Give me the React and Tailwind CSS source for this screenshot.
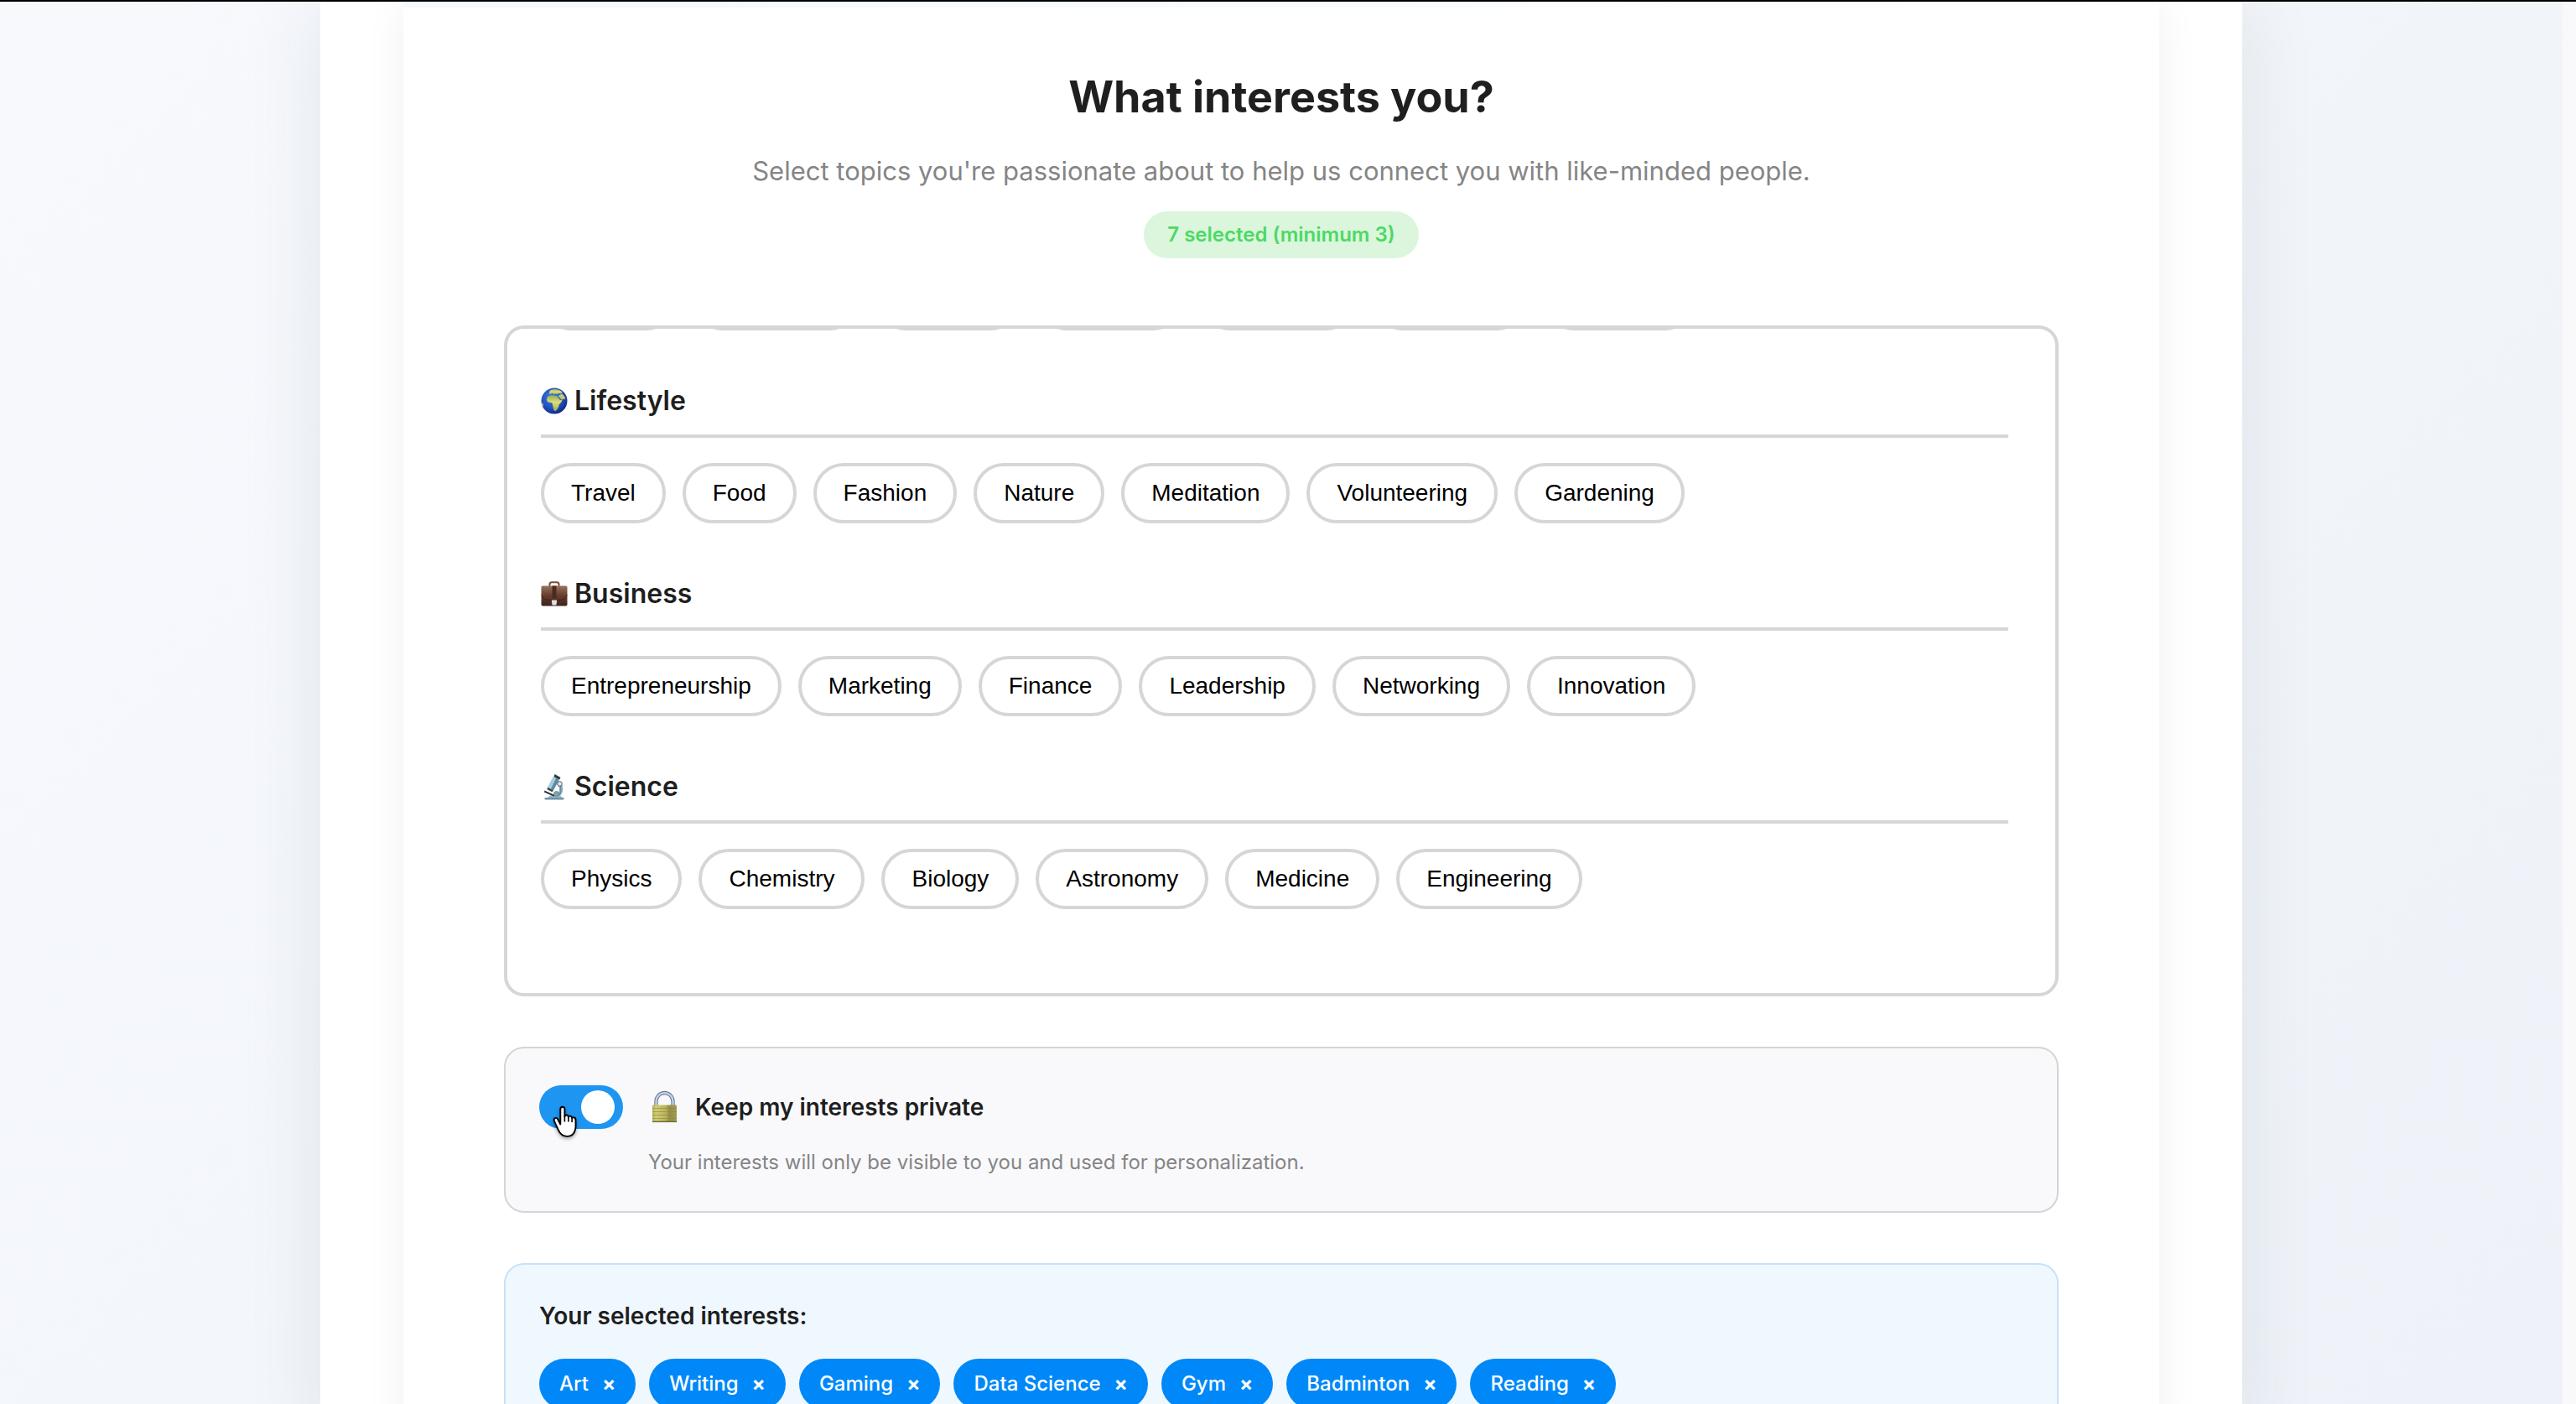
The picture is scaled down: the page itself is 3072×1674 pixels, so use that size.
import { useState } from "react";

const PREVIOUS_ROW = [
  "w-[161px]",
  "w-[199px]",
  "w-[172px]",
  "w-[174px]",
  "w-[186px]",
  "w-[184px]",
  "w-[180px]",
];

const CATEGORIES = [
  {
    name: "Lifestyle",
    Icon: GlobeIcon,
    topics: ["Travel", "Food", "Fashion", "Nature", "Meditation", "Volunteering", "Gardening"],
  },
  {
    name: "Business",
    Icon: BriefcaseIcon,
    topics: ["Entrepreneurship", "Marketing", "Finance", "Leadership", "Networking", "Innovation"],
  },
  {
    name: "Science",
    Icon: MicroscopeIcon,
    topics: ["Physics", "Chemistry", "Biology", "Astronomy", "Medicine", "Engineering"],
  },
];

const SELECTED = ["Art", "Writing", "Gaming", "Data Science", "Gym", "Badminton", "Reading"];

function GlobeIcon() {
  return (
    <svg viewBox="0 0 32 32" className="size-8 shrink-0" aria-hidden="true">
      <defs>
        <radialGradient id="sea" cx="0.4" cy="0.35" r="0.7">
          <stop offset="0" stopColor="#3f7be0" />
          <stop offset="0.6" stopColor="#2150c0" />
          <stop offset="1" stopColor="#12277c" />
        </radialGradient>
        <linearGradient id="land" x1="0" y1="0" x2="0" y2="1">
          <stop offset="0" stopColor="#8fae4c" />
          <stop offset="0.45" stopColor="#e3dc7c" />
          <stop offset="1" stopColor="#8fb24e" />
        </linearGradient>
      </defs>
      <circle cx="16" cy="16" r="15.5" fill="url(#sea)" />
      <path d="M11 3.600c2.500-1.600 7-2 10-.8 1.700.7 3.400 1.800 4.600 3l-1.600 1.700-3-.5-1.500 1.500-2-1-2.500.8-1-1.800-2.500 1.600-2-.3z" fill="url(#land)" />
      <path d="M7.500 12c.8-2 3.500-3 6.500-2.800 2 .1 3.500 1 5.500 1 1.400 1.500 1.800 3.400 3.400 4.600l2.600.2c-.4 2.200-2.500 3.800-3.800 5.400-.4 1.800-.2 3-1.400 4.400-1 1.700-2 3.300-3.800 3.200-1.500-.9-1.500-3.500-2.100-5.300-.6-1.500-.1-3-1-4.300-1.500-.8-4-.1-5.200-1.500-1.300-1.500-1.500-3.300-.7-4.900z" fill="url(#land)" />
      <path d="M21 9.500l4.500-2 3 3.500.8 3-1.800-.4-2.300 1.200-3.200-2.900z" fill="#c9c66a" />
      <path d="M.9 18.500l1.600.5.5 2.800-.9 1.300a15 15 0 0 1-1.200-4.600z" fill="#d8d04e" />
    </svg>
  );
}

function BriefcaseIcon() {
  return (
    <svg viewBox="0 0 32 32" className="size-8 shrink-0" aria-hidden="true">
      <defs>
        <linearGradient id="leather" x1="0" y1="0" x2="0" y2="1">
          <stop offset="0" stopColor="#96735b" />
          <stop offset="0.45" stopColor="#6b4030" />
          <stop offset="1" stopColor="#3d231b" />
        </linearGradient>
      </defs>
      <path d="M10.500 7V4.800c0-1.600 1-2.500 2.500-2.500h6c1.500 0 2.500.9 2.500 2.500V7" fill="none" stroke="#7d4a3c" strokeWidth="2" />
      <rect x="0.500" y="6.500" width="31" height="24" rx="1.800" fill="url(#leather)" />
      <path d="M1 17c1 5 5 6.500 9 6.500h12c4 0 8-1.500 9-6.500" fill="none" stroke="#3a2018" strokeWidth="1" />
      <rect x="13.500" y="6.500" width="5" height="15" fill="#4a2a20" />
      <path d="M12.800 23.500h6.400l-.8 6h-4.800z" fill="#e4e2e0" />
    </svg>
  );
}

function MicroscopeIcon() {
  return (
    <svg viewBox="0 0 32 32" className="size-8 shrink-0" aria-hidden="true">
      <path d="M21 9c6 2.500 7.500 13 1.500 18.500h-5c5-3 6-11 2-14z" fill="#8fb0bf" />
      <path d="M20.500 12c4.500 3 4.500 11 .5 15" fill="none" stroke="#5c7f92" strokeWidth="1" />
      <rect x="4.500" y="29" width="23" height="2.500" rx="0.800" fill="#6f93a5" />
      <path d="M8 29l3-2.500h12l2.500 2.500z" fill="#9cb8c4" />
      <path d="M4.500 20.500l12 5.500-.8 1.800-11.800-5.300z" fill="#2c3238" />
      <path d="M14.500 4l7 3.800-6.500 12.500-7-3.500z" fill="#a9cddd" />
      <path d="M18 6l3.500 1.800-6.500 12.500-3-1.500z" fill="#5d8aa3" />
      <path d="M8 16.800l7 3.500-1.500 2-6-3z" fill="#39434b" />
      <path d="M16.500 1l7 4-1.500 2.800-6.500-3.600z" fill="#2f3a44" />
      <circle cx="22.500" cy="12.500" r="2.800" fill="#dfe8ec" stroke="#4e5d66" strokeWidth="1" />
      <circle cx="18.500" cy="24.500" r="3" fill="#84a3b1" stroke="#5e7d8d" strokeWidth="0.800" />
    </svg>
  );
}

function LockIcon() {
  return (
    <svg viewBox="0 0 36 40" className="h-10 w-9 shrink-0" aria-hidden="true">
      <defs>
        <linearGradient id="brass" x1="0" y1="0" x2="1" y2="0">
          <stop offset="0" stopColor="#b7b057" />
          <stop offset="0.15" stopColor="#d3cd72" />
          <stop offset="0.55" stopColor="#b9b25c" />
          <stop offset="0.7" stopColor="#948e47" />
          <stop offset="1" stopColor="#a39c52" />
        </linearGradient>
      </defs>
      <path d="M9.500 18V13.500a10 10.500 0 0 1 20 0V18" fill="none" stroke="#6e8096" strokeWidth="4.400" />
      <path d="M9.500 18V13.500a10 10.500 0 0 1 20 0V18" fill="none" stroke="#c2d3e6" strokeWidth="2.200" />
      <rect x="5" y="17.500" width="29" height="20.500" rx="1" fill="url(#brass)" />
      <path d="M5 21.500h29M5 25.500h29M5 29.500h29M5 33.500h29" stroke="#8b8540" strokeWidth="0.600" />
      <path d="M5 37.400h29" stroke="#6f6a34" strokeWidth="1.400" />
    </svg>
  );
}

function HandCursor() {
  return (
    <svg
      viewBox="0 0 30 40"
      className="pointer-events-none absolute top-6 left-4 h-10 w-[30px] drop-shadow-[0_2px_2px_rgba(0,0,0,0.35)]"
      aria-hidden="true"
    >
      <path
        d="M9.300 22.500V4.600c0-1.800 1.100-2.900 2.500-2.900s2.600 1.100 2.600 2.900v8.600c.3-1.200 1.200-1.800 2.300-1.700 1.200.1 2 .9 2.200 2.200.4-.8 1.200-1.200 2.200-1 1.200.2 1.900 1 2 2.200.5-.6 1.200-.8 2-.6 1.500.3 2.400 1.500 2.400 3.200 0 3.500.5 7.500-.5 11.500-1.200 5-4.500 7.800-9.500 7.900-5.200.1-8.400-2.700-10.500-7.300C5.300 25.800 3.200 21.500 2 18.600c-.7-1.800-.3-3 .9-3.500 1.300-.5 2.600.1 3.400 1.600z"
        fill="#fff"
        stroke="#000"
        strokeWidth="1.900"
        strokeLinejoin="round"
      />
      <path d="M14.400 12.500v6.500M18.900 13.500V19M23.100 14.800V19.500" stroke="#000" strokeWidth="1.600" strokeLinecap="round" />
    </svg>
  );
}

function Category({ name, Icon, topics }) {
  return (
    <section className="mb-15">
      <h2 className="flex items-center gap-2 border-b-4 border-[#d6d6d6] pb-4 text-[32px] leading-12 font-semibold text-[#1f1f1f]">
        <Icon />
        {name}
      </h2>
      <div className="mt-[30px] flex flex-wrap gap-5">
        {topics.map((topic) => (
          <button
            key={topic}
            type="button"
            className="rounded-full border-4 border-[#d6d6d6] bg-white px-8 py-4 font-['Liberation_Sans',Arial,sans-serif] text-[28px] leading-8 text-black"
          >
            {topic}
          </button>
        ))}
      </div>
    </section>
  );
}

export default function App() {
  const [isPrivate, setIsPrivate] = useState(true);
  const [selected, setSelected] = useState(SELECTED);

  return (
    <div className="h-screen overflow-hidden border-t-2 border-black bg-[#f9f9fb] pr-4 font-[Inter,'Noto_Sans',sans-serif]">
      <div className="h-full bg-linear-135 from-[#f7f9fd] to-[#eef2f8]">
        <div className="mx-auto w-3/4 bg-white px-[99px] shadow-[0_0_90px_rgba(20,50,60,0.09)]">
          <main className="bg-white shadow-[0_0_48px_rgba(0,0,0,0.06)]">
            <div className="h-[7px] bg-linear-to-r from-[#f2f9ff] to-white" />
            <div className="px-30">
              <header className="flex flex-col items-center pt-[67px] text-center">
                <h1 className="text-[52px] leading-20 font-bold text-[#1f1f1f]">What interests you?</h1>
                <p className="mt-6 text-[31px] leading-12 text-[#858585]">
                  Select topics you're passionate about to help us connect you with like-minded people.
                </p>
                <span className="mt-6 rounded-full bg-[#dbf6dd] px-7 py-2 text-2xl leading-10 font-semibold text-[#4cd964]">
                  {selected.length} selected (minimum 3)
                </span>
              </header>

              <div className="mt-20 flex h-[800px] flex-col justify-end overflow-hidden rounded-3xl border-4 border-[#d6d6d6] pt-10 pr-14 pb-10 pl-10">
                <div className="mb-15 flex gap-5" aria-hidden="true">
                  {PREVIOUS_ROW.map((width, i) => (
                    <span key={i} className={"h-18 rounded-full border-4 border-[#d6d6d6] " + width} />
                  ))}
                </div>
                {CATEGORIES.map((category) => (
                  <Category key={category.name} {...category} />
                ))}
              </div>

              <div className="mt-15 flex gap-[30px] rounded-3xl border-2 border-[#d5d5d5] bg-[#f9f9fc] p-10">
                <label className="relative mt-1 h-13 w-25 shrink-0 self-start">
                  <input
                    type="checkbox"
                    checked={isPrivate}
                    onChange={(e) => setIsPrivate(e.target.checked)}
                    aria-labelledby="private-label"
                    aria-describedby="private-note"
                    className="peer block h-13 w-25 appearance-none rounded-full bg-[#cccccc] checked:bg-[#1f95f2]"
                  />
                  <span className="absolute top-1.5 left-2.5 size-10 rounded-full bg-white peer-checked:left-[50px]" />
                  <HandCursor />
                </label>
                <div>
                  <div id="private-label" className="flex items-center gap-5 text-[28px] leading-15 font-semibold text-[#1f1f1f]">
                    <LockIcon />
                    Keep my interests private
                  </div>
                  <p id="private-note" className="mt-[18px] text-2xl leading-9 text-[#858585]">
                    Your interests will only be visible to you and used for personalization.
                  </p>
                </div>
              </div>

              <section className="mt-15 rounded-3xl border-2 border-[#c5e2fb] bg-[#f0f8ff] p-10">
                <h3 className="text-[28px] leading-[42px] font-semibold text-[#1f1f1f]">Your selected interests:</h3>
                <div className="mt-[30px] flex flex-wrap gap-4">
                  {selected.map((item) => (
                    <span
                      key={item}
                      className="flex items-center gap-4 rounded-full bg-[#0088f8] px-6 text-2xl leading-15 font-medium text-white"
                    >
                      {item}
                      <button
                        type="button"
                        aria-label={"Remove " + item}
                        onClick={() => setSelected(selected.filter((s) => s !== item))}
                        className="text-2xl leading-15 font-bold"
                      >
                        ×
                      </button>
                    </span>
                  ))}
                </div>
              </section>
            </div>
          </main>
        </div>
      </div>
    </div>
  );
}
